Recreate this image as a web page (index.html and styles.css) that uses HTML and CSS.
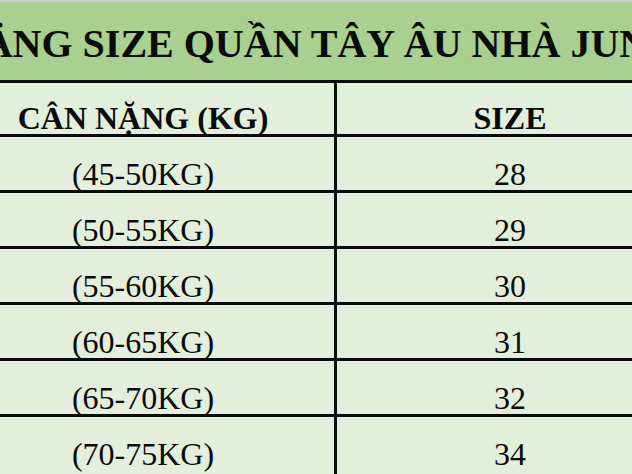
FILE: index.html
```html
<!DOCTYPE html>
<html lang="vi">
<head>
<meta charset="utf-8">
<title>Bảng size quần tây âu</title>
<link rel="stylesheet" href="styles.css">
</head>
<body>
<div class="sheet">
  <div class="top-strip"></div>
  <div class="title">BẢNG SIZE QUẦN TÂY ÂU NHÀ JUN</div>
  <div class="grid">
    <div class="cell head left">CÂN NẶNG (KG)</div>
    <div class="cell head right">SIZE</div>
    <div class="cell left">(45-50KG)</div>
    <div class="cell right">28</div>
    <div class="cell left">(50-55KG)</div>
    <div class="cell right">29</div>
    <div class="cell left">(55-60KG)</div>
    <div class="cell right">30</div>
    <div class="cell left">(60-65KG)</div>
    <div class="cell right">31</div>
    <div class="cell left">(65-70KG)</div>
    <div class="cell right">32</div>
    <div class="cell left last">(70-75KG)</div>
    <div class="cell right last">34</div>
  </div>
</div>
</body>
</html>
```
FILE: styles.css
```css
html, body {
  margin: 0;
  padding: 0;
}
body {
  width: 632px;
  height: 474px;
  overflow: hidden;
  background: #e2efda;
  font-family: "Liberation Serif", "Times New Roman", serif;
  color: #0b0b0b;
}
.sheet {
  width: 632px;
  overflow: hidden;
}
.top-strip {
  height: 2px;
  background: #cfcfcf;
}
.title {
  box-sizing: border-box;
  height: 81px;
  padding-top: 22px;
  line-height: 40px;
  font-size: 40px;
  font-weight: bold;
  white-space: nowrap;
  background: #a9d08e;
  border-bottom: 3px solid #0b0b0b;
  text-indent: -43px;
  overflow: hidden;
}
.grid {
  display: grid;
  grid-template-columns: 385px 346px;
  margin-left: -48px;
  width: 731px;
}
.cell {
  box-sizing: border-box;
  height: 56px;
  display: flex;
  align-items: flex-end;
  justify-content: center;
  font-size: 32px;
  line-height: 32px;
  border-bottom: 3px solid #0b0b0b;
  white-space: nowrap;
}
.cell.head {
  height: 54px;
  font-weight: bold;
}
.cell.left {
  border-right: 3px solid #0b0b0b;
}
.cell.last {
  border-bottom: none;
  height: 60px;
  align-items: flex-start;
  padding-top: 21px;
}
```
